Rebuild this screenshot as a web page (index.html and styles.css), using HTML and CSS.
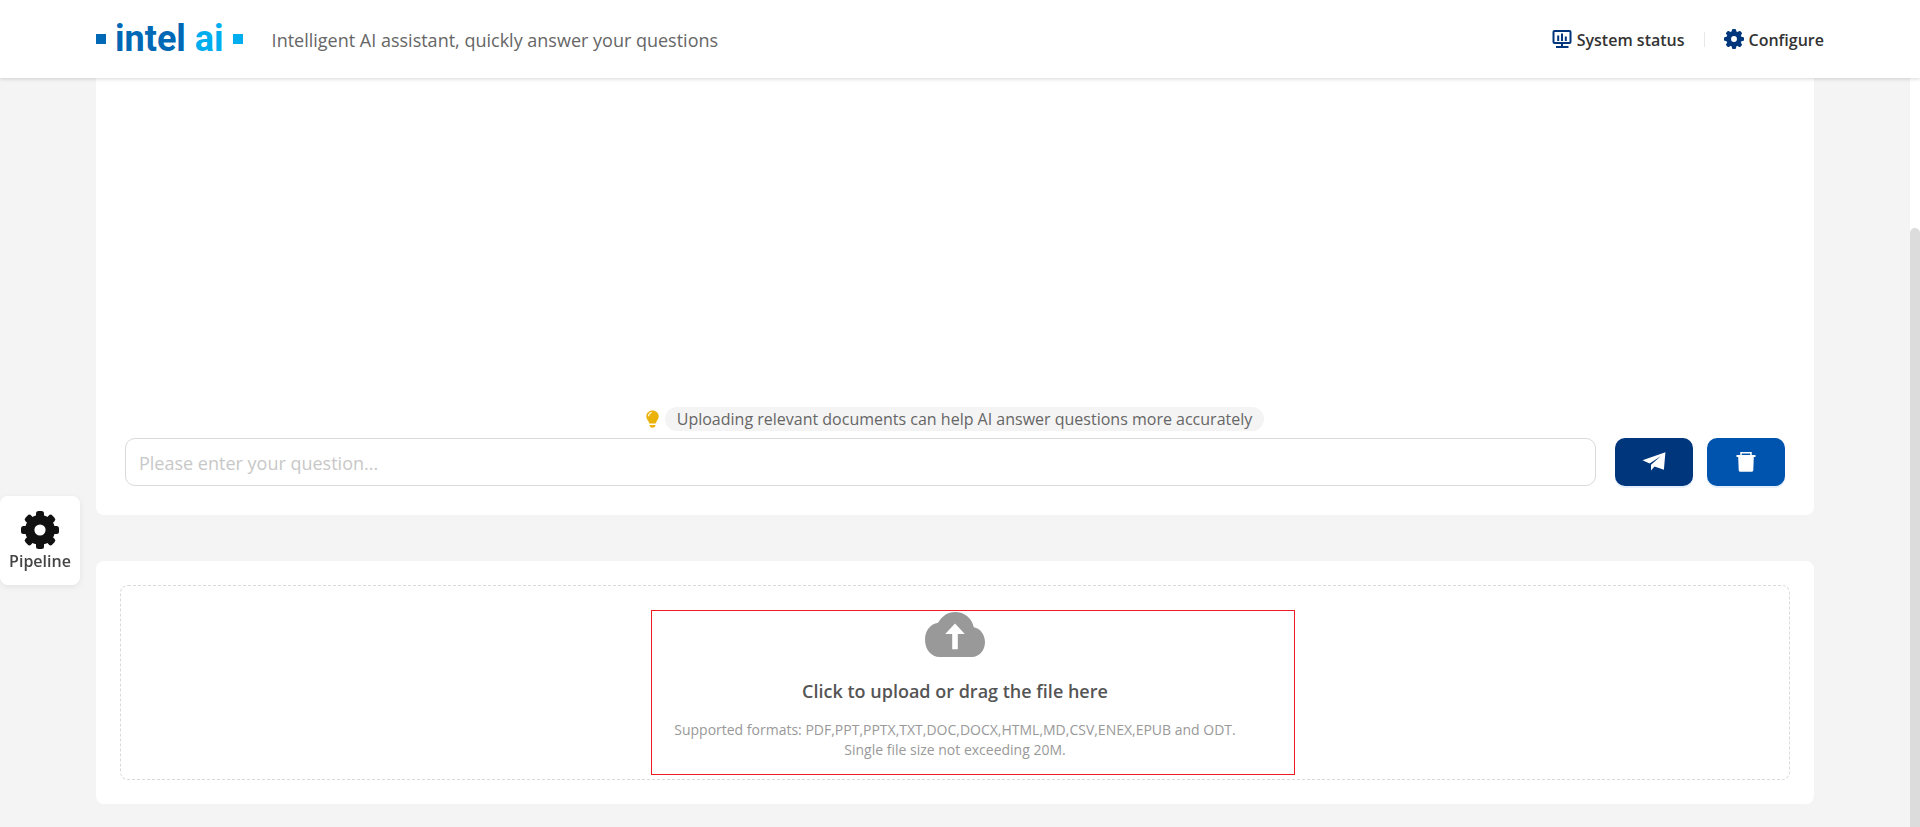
FILE: index.html
```html
<!DOCTYPE html>
<html lang="en">
<head>
<meta charset="utf-8">
<title>Intel AI assistant</title>
<link rel="stylesheet" href="styles.css">
</head>
<body>
<svg class="sprite" width="0" height="0" aria-hidden="true">
  <symbol id="gear" viewBox="-19 -19 38 38">
    <mask id="gear-hole"><rect x="-19" y="-19" width="38" height="38" fill="#fff"/><circle r="5.6" fill="#000"/></mask>
    <g mask="url(#gear-hole)" fill="currentColor">
      <circle r="15"/>
      <rect x="-4" y="-19" width="8" height="38" rx="2.5"/>
      <rect x="-4" y="-19" width="8" height="38" rx="2.5" transform="rotate(45)"/>
      <rect x="-4" y="-19" width="8" height="38" rx="2.5" transform="rotate(90)"/>
      <rect x="-4" y="-19" width="8" height="38" rx="2.5" transform="rotate(135)"/>
    </g>
  </symbol>
</svg>
<header class="header">
  <div class="brand">
    <div class="logo"><span class="square"></span><span class="logo-text">intel <span class="logo-ai">ai</span></span><span class="square square-light"></span></div>
    <p class="tagline">Intelligent AI assistant, quickly answer your questions</p>
  </div>
  <nav class="nav">
    <a class="nav-link" href="#status">
      <svg class="nav-icon" viewBox="0 0 20 20" fill="none" stroke="currentColor" stroke-width="2">
        <rect x="1.5" y="2" width="17" height="12" rx="1"/>
        <path d="M6.2 6.5v5.500M10 4.500V12M13.800 7.500V12M10 14v4M4 18h12.500"/>
      </svg><span class="nav-label">System status</span></a>
    <span class="divider"></span>
    <a class="nav-link" href="#configure"><svg class="nav-icon"><use href="#gear"/></svg><span class="nav-label">Configure</span></a>
  </nav>
</header>
<div class="body">
  <main class="main">
    <section class="card chat">
      <div class="hint">
        <svg class="bulb" viewBox="0 0 13 18"><path d="M6.500 0.500C3 .5.300 3.100.300 6.400c0 2.600 1.700 3.700 2.500 5.500l.5 1.600h6.400l.5-1.600c.8-1.800 2.500-2.900 2.500-5.500C12.700 3.100 10 .5 6.500.5z" fill="#ecb20c"/><path d="M3.500 15h6c0 1.800-1.200 2.800-3 2.800s-3-1-3-2.800z" fill="#ecb20c"/><path d="M2.600 6.300c0-2 1.300-3.400 3.100-3.800" stroke="#fff" stroke-width="1.100" fill="none"/></svg>
        <span class="hint-text">Uploading relevant documents can help AI answer questions more accurately</span>
      </div>
      <form class="ask">
        <input class="question" type="text" placeholder="Please enter your question..." aria-label="Question">
        <button class="action" type="button" aria-label="Send">
          <svg class="action-icon" viewBox="0 0 24 24"><path d="M23.400 2.200.500 10.300l7.100 3.300L19 6 9 14.800v5.700l3.500-4.100 9.400 3.300z" fill="#fff"/></svg>
        </button>
        <button class="action action-clear" type="button" aria-label="Clear">
          <svg class="action-icon" viewBox="0 0 24 24"><path d="M7 6V2.700h10V6" fill="none" stroke="#fff" stroke-width="1.500"/><path d="M2.500 5h19v2h-1.700l-.5 13c-.1 1.200-.7 1.800-1.800 1.800h-11c-1.100 0-1.700-.6-1.800-1.800L4.200 7H2.500z" fill="#fff"/></svg>
        </button>
      </form>
    </section>
    <section class="card upload">
      <button class="drop" type="button">
        <svg class="cloud" viewBox="0 0 60 45"><path d="M15 45C6 45 0 37.500 0 27.500 0 18.500 5.500 12 13 10.800 17 4 23 0 30 0c9.500 0 17 6.300 18.800 15.200C55.500 16.500 60 22.800 60 30c0 8.500-6 15-13 15z" fill="#999"/><path d="M30 11.500 20.200 22h7v15.200h5.600V22h7z" fill="#fff"/></svg>
        <span class="drop-title">Click to upload or drag the file here</span>
        <span class="drop-note">Supported formats: PDF,PPT,PPTX,TXT,DOC,DOCX,HTML,MD,CSV,ENEX,EPUB and ODT.<br>Single file size not exceeding 20M.</span>
        <span class="highlight"></span>
      </button>
    </section>
  </main>
  <div class="scroll"><div class="thumb"></div></div>
</div>
<button class="pipeline" type="button"><svg class="pipeline-icon"><use href="#gear"/></svg>Pipeline</button>
</body>
</html>
```
FILE: styles.css
```css
* { box-sizing: border-box; }
body {
  margin: 0;
  min-height: 100vh;
  display: flex;
  flex-direction: column;
  background: #f4f4f4;
  color: #333;
  font: 16px/24px "Open Sans", "Noto Sans", sans-serif;
}
button { font: inherit; border: 0; cursor: pointer; }
.sprite { position: absolute; }
.header {
  position: relative;
  z-index: 1;
  height: 78px;
  padding: 0 96px;
  display: flex;
  align-items: center;
  justify-content: space-between;
  background: #fff;
  box-shadow: 0 1px 4px rgba(0, 0, 0, .16);
}
.brand, .logo, .nav, .nav-link { display: flex; align-items: center; }
.brand { gap: 29px; }
.logo { gap: 9px; }
.logo-text { font: 700 36px/44px Roboto, sans-serif; color: #0068b5; }
.logo-ai { color: #00aeef; }
.square { width: 10px; height: 10px; background: #0068b5; }
.square-light { background: #00aeef; }
.tagline { margin: 0; padding-top: 2px; font-size: 18px; color: #666; }
.nav { gap: 19px; }
.nav-link { gap: 5px; color: #333; font-weight: 600; text-decoration: none; }
.nav-label { padding-top: 2px; }
.nav-icon { width: 20px; height: 20px; color: #00377c; }
.divider { width: 1px; height: 15px; background: #e8e8e8; }
.body { flex: 1; display: flex; }
.main {
  flex: 1;
  padding: 0 96px 23px;
  display: flex;
  flex-direction: column;
  gap: 46px;
}
.card { background: #fff; border-radius: 8px; }
.chat {
  flex: 1;
  padding: 0 29px 29px;
  border-radius: 0 0 8px 8px;
  display: flex;
  flex-direction: column;
  justify-content: flex-end;
  gap: 7px;
}
.hint { display: flex; justify-content: center; align-items: center; gap: 6px; }
.bulb { width: 13px; height: 18px; }
.hint-text { padding: 1px 12px 0; line-height: 23px; border-radius: 12px; background: #f4f4f4; color: #666; }
.ask { display: flex; gap: 14px; }
.question {
  flex: 1;
  height: 48px;
  margin-right: 5px;
  padding: 1px 13px 0;
  border: 1px solid #d9d9d9;
  border-radius: 10px;
  background: #fff;
  font: 18px/24px "Open Sans", "Noto Sans", sans-serif;
}
.question::placeholder { color: #c8c8c8; }
.action {
  width: 78px;
  height: 48px;
  padding: 0;
  display: flex;
  align-items: center;
  justify-content: center;
  border-radius: 10px;
  background: #00377c;
  box-shadow: 0 2px 0 #e6effc;
}
.action-clear { background: #0054ae; }
.action-icon { width: 24px; height: 24px; }
.upload { padding: 24px; }
.drop {
  position: relative;
  width: 100%;
  padding: 26px 0 19px;
  display: flex;
  flex-direction: column;
  align-items: center;
  border: 1px dashed #d9d9d9;
  border-radius: 8px;
  background: #fff;
}
.cloud { width: 60px; height: 45px; margin-bottom: 22px; }
.drop-title { margin-bottom: 17px; font-size: 18px; font-weight: 600; color: #555; }
.drop-note { font-size: 14px; line-height: 20px; color: #999; }
.highlight {
  position: absolute;
  top: 24px;
  bottom: 4px;
  left: calc(50% - 304px);
  width: 644px;
  border: 1px solid #ed1c24;
}
.scroll { width: 10px; padding-top: 150px; display: flex; background: #fff; }
.thumb { flex: 1; border-radius: 5px 5px 0 0; background: #dcdcdc; }
.pipeline {
  position: fixed;
  left: 0;
  top: 60%;
  width: 80px;
  padding: 15px 0 12px;
  display: flex;
  flex-direction: column;
  align-items: center;
  border-radius: 8px;
  background: #fff;
  box-shadow: 0 2px 6px rgba(0, 0, 0, .07);
  color: #444;
  font-weight: 600;
}
.pipeline-icon { width: 38px; height: 38px; color: #111; }
```
